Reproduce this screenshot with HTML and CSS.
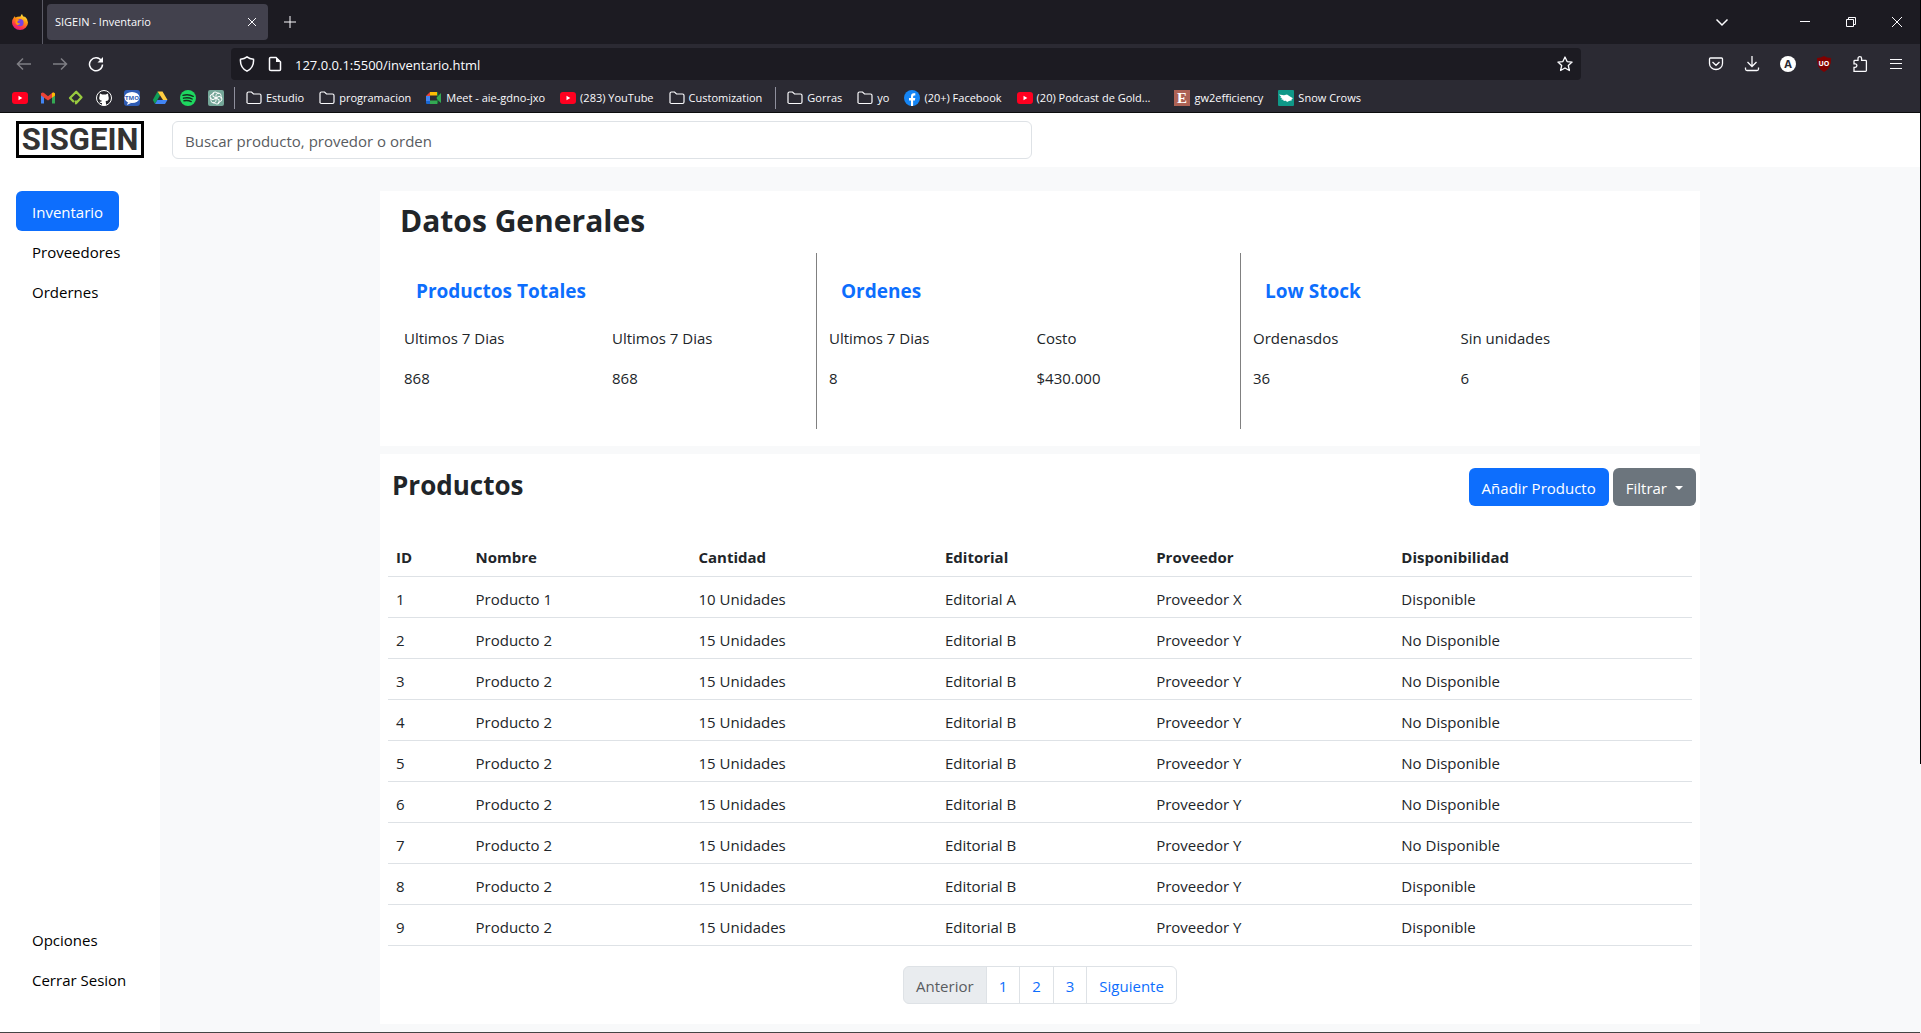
FILE: index.html
```html
<!DOCTYPE html>
<html lang="es">
<head>
<meta charset="utf-8">
<meta name="viewport" content="width=device-width, initial-scale=1">
<title>SIGEIN - Inventario</title>
<link rel="stylesheet" href="styles.css">
</head>
<body>
<svg class="defs" aria-hidden="true">
  <symbol id="folder" viewBox="0 0 16 16"><path d="M1 13V3.500Q1 2 2.500 2H5.500L7.500 4H13.500Q15 4 15 5.500V12Q15 13.500 13.500 13.500H2.500Q1 13.500 1 12" fill="none" stroke="#fbfbfe" stroke-width="1.200"/></symbol>
  <symbol id="youtube" viewBox="0 0 16 16"><rect y="2" width="16" height="12" rx="3" fill="#ff0020"/><path d="M6.500 5.800v4.400L10.300 8z" fill="#fff"/></symbol>
</svg>

<header class="browser">
  <div class="tabs">
    <svg class="firefox" viewBox="0 0 16 16"><defs><linearGradient id="fx" x1=".8" y1="0" x2=".3" y2="1"><stop offset="0" stop-color="#fff44f"/><stop offset=".4" stop-color="#ff980e"/><stop offset=".75" stop-color="#ff3647"/><stop offset="1" stop-color="#e31587"/></linearGradient></defs><path d="M8.500 2.500Q9 .8 10 0q.4 2 2.300 3.200.3-.6.3-1Q16 5 16 8.500A8 7.500 0 0 1 0 8.500Q0 5.500 1.800 3.500q.2-.8.900-1.300.2 1 .8 1.400Q5 2.500 8.500 2.500z" fill="url(#fx)"/><circle cx="8" cy="8.700" r="3.600" fill="#7542e5"/><path d="M4 5.500q2-.8 3.800.8-2.600.2-2.500 2 .9 1.500 3 .7-1 2.600-3.500 1.800Q2.500 9 4 5.500z" fill="#ff980e"/></svg>
    <div class="tab"><span>SIGEIN - Inventario</span>
      <button type="button" aria-label="Cerrar pestaña"><svg class="s10" viewBox="0 0 10 10"><path d="M1 1l8 8M9 1L1 9" class="line"/></svg></button></div>
    <button type="button" aria-label="Nueva pestaña"><svg class="s12" viewBox="0 0 12 12"><path d="M6 0v12M0 6h12" class="line"/></svg></button>
    <div class="window">
      <button type="button" aria-label="Lista de pestañas"><svg class="s14" viewBox="0 0 14 14"><path d="M1.500 4.500L7 10l5.500-5.500" class="bold"/></svg></button>
      <button type="button" class="first" aria-label="Minimizar"><svg class="s10" viewBox="0 0 10 10"><path d="M0 4.500h10" class="thin"/></svg></button>
      <button type="button" aria-label="Restaurar"><svg class="s10" viewBox="0 0 10 10"><path d="M.5 2.500h7v7h-7zM2.500 2.500v-2h7v7h-2" class="thin"/></svg></button>
      <button type="button" aria-label="Cerrar"><svg class="s10" viewBox="0 0 10 10"><path d="M0 0l10 10M10 0L0 10" class="thin"/></svg></button>
    </div>
  </div>

  <div class="toolbar">
    <div class="nav-buttons">
      <button type="button" class="dim" aria-label="Atrás"><svg class="s16" viewBox="0 0 16 16"><path d="M15 8H1.500M7 2.500L1.500 8 7 13.500" class="bold"/></svg></button>
      <button type="button" class="dim" aria-label="Adelante"><svg class="s16" viewBox="0 0 16 16"><path d="M1 8h13.500M9 2.500L14.500 8 9 13.500" class="bold"/></svg></button>
      <button type="button" aria-label="Recargar"><svg class="s16" viewBox="0 0 16 16"><path d="M13.500 4.800A6.500 6.500 0 1 0 14.500 8.500" class="bold"/><path d="M15 1v5.500H9.500z" fill="#fbfbfe"/></svg></button>
    </div>
    <div class="address">
      <svg class="s16" viewBox="0 0 16 16"><path d="M8 .8Q10.500 2.800 14.500 3.300 15.200 11.500 8 15.200.8 11.500 1.500 3.300 5.500 2.800 8 .8z" class="bold"/></svg>
      <svg class="s16" viewBox="0 0 16 16"><path d="M3.500 1.500H9L13.500 6v7.500q0 1-1 1h-8.500q-1.500 0-1.500-1V2.500q0-1 1-1z" class="bold"/><path d="M9 1v5h5z" fill="#fbfbfe"/></svg>
      <input type="text" aria-label="Dirección" value="127.0.0.1:5500/inventario.html">
      <button type="button" aria-label="Marcar página"><svg class="s16" viewBox="0 0 16 16"><path d="M8 1l2.100 4.600 5 .5-3.800 3.400 1.100 5L8 12l-4.400 2.500 1.100-5L.9 6.100l5-.5z" class="medium" stroke-linejoin="round"/></svg></button>
    </div>
    <div class="extensions">
      <button type="button" aria-label="Pocket"><svg class="s16" viewBox="0 0 16 16"><path d="M2.500 2h11q1 0 1 1v4.500a6.500 6 0 0 1-13 0V3q0-1 1-1zM4.500 6L8 9.300 11.500 6" class="medium"/></svg></button>
      <button type="button" aria-label="Descargas"><svg class="s16" viewBox="0 0 16 16"><path d="M8 0v10.500M3.500 6L8 10.500 12.500 6M1.500 11.500v1.500q0 1.500 1.500 1.500h10q1.500 0 1.500-1.500v-1.500" class="medium"/></svg></button>
      <button type="button" aria-label="Cuenta"><svg class="s16" viewBox="0 0 16 16"><circle cx="8" cy="8" r="8" fill="#fff"/><text x="8" y="12" class="mark" font-size="11" fill="#2b2a33">A</text></svg></button>
      <button type="button" aria-label="uBlock"><svg class="s16" viewBox="0 0 16 16"><path d="M8 0q3 2 7 2 .5 10-7 14Q.5 12 1 2q4 0 7-2z" fill="#800000"/><text x="8" y="10" class="mark" font-size="7" fill="#fff">UO</text></svg></button>
      <button type="button" aria-label="Extensiones"><svg class="s16" viewBox="0 0 16 16"><path d="M2 15.300v-4h1.200a1.700 1.700 0 0 0 0-3.400H2V5.200q0-.8.800-.8H6V2.500a1.700 1.700 0 0 1 3.600 0v1.900h4q.8 0 .8.800v9.300q0 .8-.8.800z" class="medium"/></svg></button>
      <button type="button" aria-label="Menú"><svg class="s16" viewBox="0 0 16 16"><path d="M2 3.500h12M2 7.500h12M2 12.500h12" class="line"/></svg></button>
    </div>
  </div>

  <nav class="bookmarks" aria-label="Marcadores">
    <a href="#" aria-label="YouTube"><svg class="s16"><use href="#youtube"/></svg></a>
    <a href="#" aria-label="Gmail"><svg class="s16" viewBox="0 0 16 16"><path d="M1 3v10.500h3V7z" fill="#4285f4"/><path d="M15 3v10.500h-3V7z" fill="#34a853"/><path d="M1 5.500V3.600Q2.500 1.800 4 3l4 3.200L12 3q1.500-1.200 3 .6v1.900L8 10.500z" fill="#ea4335"/><path d="M12 3q1.500-1.200 3 .6v1.900l-3 2.200z" fill="#fbbc04"/></svg></a>
    <a href="#" aria-label="Platzi"><svg class="s16" viewBox="0 0 16 16"><path d="M6 12L2 8l6.200-6.200 5.300 5.500-5.500 6V10.500" fill="none" stroke="#98ca3f" stroke-width="2.300" stroke-linejoin="round"/></svg></a>
    <a href="#" aria-label="GitHub"><svg class="s16" viewBox="0 0 16 16"><circle cx="8" cy="8" r="7.500" fill="#24242a" stroke="#fff"/><path d="M4 3.500l2.200 1.100h3.600L12 3.500l.3 2.300Q14 11 9.700 11l.5 4.500H5.800L6 13q-2 .3-2.700-1.500 2 .6 2.700-.7Q2 10.500 3.700 5.800z" fill="#fff"/></svg></a>
    <a href="#" aria-label="TMO"><svg class="s16" viewBox="0 0 16 16"><rect width="16" height="16" rx="3" fill="#2f5cb4"/><ellipse cx="8" cy="7.500" rx="7.500" ry="5.500" fill="#fff"/><path d="M4 12l-1 3 4-2z" fill="#fff"/><text x="8" y="10" class="mark" font-size="6" fill="#2f5cb4">TMO</text></svg></a>
    <a href="#" aria-label="Drive"><svg class="s16" viewBox="0 0 16 16"><path d="M5.500 1.500L.8 10 3 14l5-8.500z" fill="#0f9d58"/><path d="M5.500 1.500h5L15.500 10H11z" fill="#ffcd40"/><path d="M3 14l2.400-4h10L13 14z" fill="#4285f4"/></svg></a>
    <a href="#" aria-label="Spotify"><svg class="s16" viewBox="0 0 16 16"><circle cx="8" cy="8" r="8" fill="#1ed760"/><path d="M3 5.300q5.500-1.600 10.200 1M3.500 8.200q4.700-1.300 8.700.8M4 10.800q3.900-1 7.200.8" fill="none" stroke="#14301f" stroke-width="1.400" stroke-linecap="round"/></svg></a>
    <a href="#" aria-label="ChatGPT"><svg class="s16" viewBox="0 0 16 16"><rect width="16" height="16" rx="2" fill="#74a698"/><g fill="none" stroke="#fff" stroke-width=".9"><path id="petal" d="M8 8V4.500L10.500 3q2.500.2 2.600 2.700v3"/><use href="#petal" transform="rotate(60 8 8)"/><use href="#petal" transform="rotate(120 8 8)"/><use href="#petal" transform="rotate(180 8 8)"/><use href="#petal" transform="rotate(240 8 8)"/><use href="#petal" transform="rotate(300 8 8)"/></g></svg></a>
    <span class="separator"></span>
    <a href="#" class="named"><svg class="s16"><use href="#folder"/></svg>Estudio</a>
    <a href="#" class="named"><svg class="s16"><use href="#folder"/></svg>programacion</a>
    <a href="#" class="named"><svg class="s16" viewBox="0 0 16 16"><path d="M0 6l4-4v4z" fill="#ea4335"/><path d="M4 2h7v3.500H4z" fill="#fbbc04"/><path d="M0 6h4v5H0z" fill="#4285f4"/><path d="M0 11h4v3H1q-1 0-1-1z" fill="#1967d2"/><path d="M4 10.500h7V14H4zM11 7l4-4v10l-4-3.500z" fill="#34a853"/><path d="M11 2q1 0 1.200 1v3L10 8l2.200 2v3q-.2 1-1.200 1z" fill="#188038"/></svg>Meet - aie-gdno-jxo</a>
    <a href="#" class="named"><svg class="s16"><use href="#youtube"/></svg>(283) YouTube</a>
    <a href="#" class="named"><svg class="s16"><use href="#folder"/></svg>Customization</a>
    <span class="separator"></span>
    <a href="#" class="named"><svg class="s16"><use href="#folder"/></svg>Gorras</a>
    <a href="#" class="named"><svg class="s16"><use href="#folder"/></svg>yo</a>
    <a href="#" class="named"><svg class="s16" viewBox="0 0 16 16"><circle cx="8" cy="8" r="8" fill="#1585f5"/><path d="M7 16v-5.500H5V8h2V6.500Q7 3.300 9.800 3.300h1.500v2.200h-1q-1.200 0-1.200 1.200V8h2.200l-.4 2.500H9.100V16z" fill="#fff"/></svg>(20+) Facebook</a>
    <a href="#" class="named long"><svg class="s16"><use href="#youtube"/></svg>(20) Podcast de Gold...</a>
    <a href="#" class="named"><svg class="s16" viewBox="0 0 16 16"><rect width="16" height="16" fill="#ad6255"/><text x="8" y="13" class="mark serif" font-size="15" fill="#fff">E</text></svg>gw2efficiency</a>
    <a href="#" class="named"><svg class="s16" viewBox="0 0 16 16"><rect width="16" height="16" rx="1" fill="#0f9888"/><path d="M1 4.500l5 .8 3-.8 3 2 3 1.700-1.500 1 .5 1-3 .8-2 1-1-1.300-3 .3 1-1-3-.7 1.500-.6L2 7.500l1.500-.3z" fill="#fff"/></svg>Snow Crows</a>
  </nav>
</header>

<div class="page">
  <header class="topbar">
    <div class="logo">SISGEIN</div>
    <input class="search" type="search" aria-label="Buscar" placeholder="Buscar producto, provedor o orden">
  </header>

  <div class="body">
    <nav class="sidebar">
      <a href="#" class="active" aria-current="page">Inventario</a>
      <a href="#">Proveedores</a>
      <a href="#">Ordernes</a>
      <a href="#" class="push">Opciones</a>
      <a href="#">Cerrar Sesion</a>
    </nav>

    <main class="main">
      <section class="card summary">
        <h1>Datos Generales</h1>
        <div class="stats">
          <div class="stat">
            <h2>Productos Totales</h2>
            <dl><div><dt>Ultimos 7 Dias</dt><dd>868</dd></div><div><dt>Ultimos 7 Dias</dt><dd>868</dd></div></dl>
          </div>
          <div class="stat">
            <h2>Ordenes</h2>
            <dl><div><dt>Ultimos 7 Dias</dt><dd>8</dd></div><div><dt>Costo</dt><dd>$430.000</dd></div></dl>
          </div>
          <div class="stat">
            <h2>Low Stock</h2>
            <dl><div><dt>Ordenasdos</dt><dd>36</dd></div><div><dt>Sin unidades</dt><dd>6</dd></div></dl>
          </div>
        </div>
      </section>

      <section class="card products">
        <div class="products-head">
          <h2>Productos</h2>
          <div class="actions">
            <button type="button" class="btn primary">Añadir Producto</button>
            <button type="button" class="btn secondary">Filtrar <span class="caret"></span></button>
          </div>
        </div>
        <table>
          <colgroup><col class="c-id"><col class="c-name"><col class="c-qty"><col class="c-pub"><col class="c-sup"><col class="c-av"></colgroup>
          <thead><tr><th>ID</th><th>Nombre</th><th>Cantidad</th><th>Editorial</th><th>Proveedor</th><th>Disponibilidad</th></tr></thead>
          <tbody>
            <tr><td>1</td><td>Producto 1</td><td>10 Unidades</td><td>Editorial A</td><td>Proveedor X</td><td>Disponible</td></tr>
            <tr><td>2</td><td>Producto 2</td><td>15 Unidades</td><td>Editorial B</td><td>Proveedor Y</td><td>No Disponible</td></tr>
            <tr><td>3</td><td>Producto 2</td><td>15 Unidades</td><td>Editorial B</td><td>Proveedor Y</td><td>No Disponible</td></tr>
            <tr><td>4</td><td>Producto 2</td><td>15 Unidades</td><td>Editorial B</td><td>Proveedor Y</td><td>No Disponible</td></tr>
            <tr><td>5</td><td>Producto 2</td><td>15 Unidades</td><td>Editorial B</td><td>Proveedor Y</td><td>No Disponible</td></tr>
            <tr><td>6</td><td>Producto 2</td><td>15 Unidades</td><td>Editorial B</td><td>Proveedor Y</td><td>No Disponible</td></tr>
            <tr><td>7</td><td>Producto 2</td><td>15 Unidades</td><td>Editorial B</td><td>Proveedor Y</td><td>No Disponible</td></tr>
            <tr><td>8</td><td>Producto 2</td><td>15 Unidades</td><td>Editorial B</td><td>Proveedor Y</td><td>Disponible</td></tr>
            <tr><td>9</td><td>Producto 2</td><td>15 Unidades</td><td>Editorial B</td><td>Proveedor Y</td><td>Disponible</td></tr>
          </tbody>
        </table>
        <nav class="pagination" aria-label="Páginas">
          <a class="disabled" aria-disabled="true" href="#">Anterior</a>
          <a href="#">1</a>
          <a href="#">2</a>
          <a href="#">3</a>
          <a href="#">Siguiente</a>
        </nav>
      </section>
    </main>
  </div>
</div>
</body>
</html>
```
FILE: styles.css
```css
* { box-sizing: border-box; margin: 0; }

html {
  min-height: 100%;
  padding-right: 1px;
  background: linear-gradient(#000 74%, #f8f9fa 74%);
}

body {
  display: flex;
  flex-direction: column;
  min-height: 100vh;
  border-bottom: 1px solid #444;
  background: #fff;
  color: #212529;
  font: 15px/24px "Open Sans", "Noto Sans", sans-serif;
}

a { color: inherit; text-decoration: none; }
button, input { font: inherit; color: inherit; border: 0; background: none; padding: 0; }
svg { display: block; flex: none; }

.defs { display: none; }
.s10 { width: 10px; height: 10px; }
.s12 { width: 12px; height: 12px; }
.s14 { width: 14px; height: 14px; }
.s16 { width: 16px; height: 16px; }
.line, .thin, .medium, .bold { fill: none; stroke: #fbfbfe; }
.medium { stroke-width: 1.3; }
.bold { stroke-width: 1.5; }
.mark { font-family: "Open Sans", sans-serif; font-weight: 700; text-anchor: middle; }
.serif { font-family: "Liberation Serif", serif; }

/* Browser window */
.browser {
  border-bottom: 1px solid #0c0c0d;
  background: #2b2a33;
  color: #fbfbfe;
  font-size: 11px;
  line-height: 16px;
}

.tabs {
  display: flex;
  align-items: center;
  height: 44px;
  padding-left: 12px;
  background: #1c1b22;
}
.firefox { width: 16px; height: 16px; }
.tab {
  display: flex;
  align-items: center;
  justify-content: space-between;
  position: relative;
  width: 221px;
  height: 36px;
  margin: 0 16px 0 19px;
  padding: 0 11px 0 8px;
  border-radius: 4px;
  background: #42414d;
}
.tab::before {
  content: "";
  position: absolute;
  top: -4px;
  left: -5px;
  width: 1px;
  height: 44px;
  background: #5b5b66;
}
.window { display: flex; align-items: center; gap: 36px; margin-left: auto; padding-right: 18px; }
.window .first { margin-left: 35px; }

.toolbar {
  display: flex;
  align-items: center;
  height: 36px;
  padding: 4px 16px 0;
}
.nav-buttons, .extensions { display: flex; align-items: center; gap: 20px; }
.nav-buttons { width: 215px; }
.dim { opacity: 0.4; }
.extensions { width: 323px; justify-content: flex-end; }
.address {
  display: flex;
  flex: 1;
  align-items: center;
  gap: 12px;
  height: 32px;
  padding: 0 8px;
  border-radius: 4px;
  background: #1c1b22;
  font-size: 13px;
}
.address input { flex: 1; min-width: 0; padding-top: 1px; }

.bookmarks {
  display: flex;
  align-items: center;
  gap: 12px;
  height: 32px;
  padding: 4px 12px 0;
  white-space: nowrap;
}
.bookmarks a { display: flex; align-items: center; gap: 4px; }
.bookmarks .named { margin-right: 3px; }
.bookmarks .long { margin-right: 12px; }
.separator { width: 1px; height: 22px; margin: 0 -1px 0 -2px; background: #8f8f9d; }

/* Application */
.page { display: flex; flex: 1; flex-direction: column; }
.topbar { display: flex; gap: 28px; padding: 8px 16px; }
.logo {
  width: 128px;
  height: 37px;
  border: 3px solid #000;
  color: #333;
  font: 700 31px/32px Roboto, sans-serif;
  text-align: center;
}
.search {
  width: 860px;
  height: 38px;
  padding: 8px 12px 6px;
  border: 1px solid #dee2e6;
  border-radius: 6px;
}
.search::placeholder { color: #595c5f; opacity: 1; }

.body { display: flex; flex: 1; }
.sidebar {
  display: flex;
  flex-direction: column;
  align-items: flex-start;
  width: 160px;
  padding: 24px 16px 33px;
  color: #000;
}
.sidebar a { padding: 9px 16px 7px; border-radius: 6px; }
.sidebar .active { background: #0d6efd; color: #fff; }
.sidebar .push { margin-top: auto; }

.main {
  display: flex;
  flex: 1;
  flex-direction: column;
  gap: 8px;
  padding: 24px 0 8px;
  background: #f8f9fa;
}
.card { width: 100%; max-width: 1320px; margin: 0 auto; background: #fff; }

.summary { padding-bottom: 17px; }
.summary h1 { padding: 11px 20px 13px; font-size: 30px; line-height: 38px; }
.stats { display: grid; grid-template-columns: repeat(3, 1fr); padding: 0 36px 0 12px; }
.stat { height: 176px; padding-top: 24px; border-left: 1px solid #808080; }
.stat:first-child { border-left: 0; }
.stat h2 { padding: 0 24px; color: #0d6efd; font-size: 19px; line-height: 28px; }
.stat dl { display: grid; grid-template-columns: 1fr 1fr; padding: 21px 8px 0 0; }
.stat dl div { padding-left: 12px; }
.stat dd { margin: 16px 0 0; }

.products { flex: 1; padding: 14px 4px 20px; }
.products-head { display: flex; justify-content: space-between; padding-left: 8px; }
.products h2 { font-size: 26px; line-height: 34px; }
.actions { display: flex; gap: 4px; }
.btn { height: 38px; padding: 1px 13px 0; border-radius: 6px; color: #fff; }
.primary { background: #0d6efd; }
.secondary { display: flex; align-items: center; gap: 8px; background: #6c757d; }
.caret { border: 4px solid transparent; border-top-color: #fff; border-bottom: 0; }

table {
  width: calc(100% - 8px);
  margin: 29px 4px 20px;
  border-collapse: collapse;
  table-layout: fixed;
}
th, td { height: 41px; padding: 10px 8px 6px; border-bottom: 1px solid #dee2e6; text-align: left; }
.c-id { width: 6.1%; }
.c-name { width: 17.1%; }
.c-qty { width: 18.9%; }
.c-pub { width: 16.2%; }
.c-sup { width: 18.8%; }
.c-av { width: 22.9%; }

.pagination { display: flex; justify-content: center; }
.pagination a {
  margin-left: -1px;
  padding: 7px 12px 5px;
  border: 1px solid #dee2e6;
  color: #0d6efd;
}
.pagination a:first-child { margin-left: 0; border-radius: 6px 0 0 6px; }
.pagination a:last-child { border-radius: 0 6px 6px 0; }
.pagination .disabled { background: #e9ecef; color: #595c5f; }
```
